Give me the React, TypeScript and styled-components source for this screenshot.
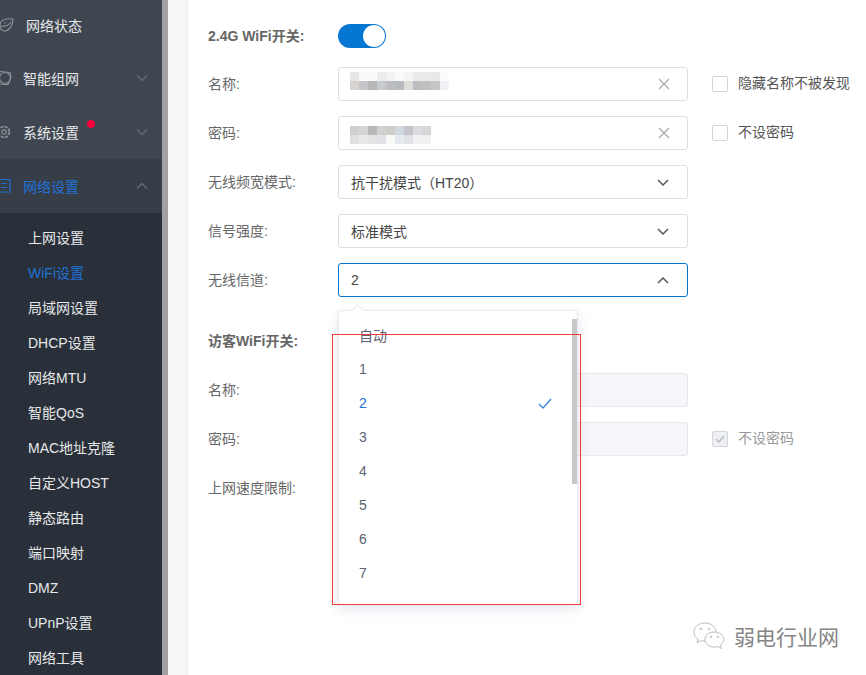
import React from 'react';
import styled, { createGlobalStyle } from 'styled-components';

const Global = createGlobalStyle`
  html, body { margin: 0; padding: 0; background: #fff; }
  * { box-sizing: border-box; }
`
const FONT = `"Liberation Sans", "Noto Sans CJK SC", sans-serif`

const Page = styled.div`
  position: relative;
  display: flex;
  width: 866px;
  height: 675px;
  overflow: hidden;
  font-family: ${FONT};
  background: #fff;
`
const Sidebar = styled.div`
  flex: 0 0 162px;
  height: 675px;
  overflow: hidden;
  background: #2a3039;
`
const MenuItem = styled.div<{ $open?: boolean; $pad: number; $h?: number; $lift?: number }>`
  position: relative;
  display: flex;
  align-items: center;
  height: ${p => p.$h ?? 54}px;
  padding: 0 14px ${p => p.$lift ?? 0}px ${p => p.$pad}px;
  background: ${p => (p.$open ? '#383e47' : '#3f4650')};
`
const MenuIcon = styled.svg<{ $active?: boolean }>`
  flex: none;
  width: 18px;
  height: 18px;
  margin-left: -28px;
  margin-right: 10px;
  fill: none;
  overflow: visible;
  stroke: ${p => (p.$active ? '#1f6fd2' : '#8a8f96')};
  stroke-width: 1.2;
`
const MenuLabel = styled.span<{ $active?: boolean }>`
  flex: 1;
  font-size: 14px;
  color: ${p => (p.$active ? '#1f72d8' : '#e6e8ea')};
`
const MenuChevron = styled.svg`
  flex: none;
  width: 12px;
  height: 8px;
  fill: none;
  stroke: #666d76;
  stroke-width: 1.3;
`
const RedDot = styled.i`
  position: absolute;
  left: 87px;
  top: 15px;
  width: 8px;
  height: 8px;
  border-radius: 50%;
  background: #f5003c;
`
const SubList = styled.div`
  padding-top: 8px;
`
const SubItem = styled.div<{ $active?: boolean }>`
  height: 35px;
  padding-left: 28px;
  line-height: 35px;
  font-size: 14px;
  color: ${p => (p.$active ? '#1f72d8' : '#e6e8ea')};
`
const Gutter = styled.div`
  flex: 0 0 6px;
  background: #a1a1a1;
`
const Margin = styled.div`
  flex: 0 0 20px;
  background: #f6f6f6;
  border-right: 1px solid #f0f0f0;
`
const Content = styled.div`
  position: relative;
  flex: 1;
  padding: 20px 0 0 20px;
`
const Row = styled.div<{ $gap?: number }>`
  display: flex;
  align-items: center;
  height: 34px;
  margin-bottom: ${p => p.$gap ?? 15}px;
`
const SwitchRow = styled(Row)`
  height: 32px;
`
const Label = styled.div<{ $bold?: boolean }>`
  flex: 0 0 130px;
  padding-bottom: 3px;
  font-size: 14px;
  font-weight: ${p => (p.$bold ? 700 : 400)};
  color: #666;
`
const Toggle = styled.div`
  display: flex;
  justify-content: flex-end;
  align-items: center;
  width: 48px;
  height: 24px;
  padding-right: 1px;
  border-radius: 12px;
  background: #0676d3;
`
const Knob = styled.i`
  width: 22px;
  height: 22px;
  border-radius: 50%;
  background: #fff;
`
const Field = styled.div<{ $focus?: boolean; $disabled?: boolean }>`
  display: flex;
  align-items: center;
  justify-content: space-between;
  flex: 0 0 350px;
  height: 34px;
  padding: 0 17px 0 12px;
  border: 1px solid ${p => (p.$focus ? '#0676d3' : p.$disabled ? '#e6e8ee' : '#dfdfdf')};
  border-radius: 3px;
  background: ${p => (p.$disabled ? '#f5f6fa' : '#fff')};
  font-size: 14px;
  color: #444;
`
const FieldIcon = styled.svg`
  flex: none;
  fill: none;
  stroke: #a8a8a8;
  stroke-width: 1.2;
`
const Caret = styled.svg`
  flex: none;
  width: 14px;
  height: 9px;
  fill: none;
  stroke: #555;
  stroke-width: 1.5;
`
const Option = styled.label<{ $disabled?: boolean }>`
  display: flex;
  align-items: center;
  margin-left: 24px;
  font-size: 14px;
  line-height: 18px;
  color: ${p => (p.$disabled ? '#999' : '#555')};
`
const OptionText = styled.span`
  padding-bottom: 2px;
`
const Box = styled.span<{ $disabled?: boolean }>`
  display: flex;
  align-items: center;
  justify-content: center;
  width: 16px;
  height: 16px;
  margin-right: 10px;
  border: 1px solid #d4d4d4;
  border-radius: 2px;
  background: ${p => (p.$disabled ? '#eef0f3' : '#fff')};
`
const Mosaic = styled.div<{ $up?: number; $down?: number }>`
  display: grid;
  grid-auto-rows: 9px;
  margin: ${p => p.$down ?? 0}px 0 ${p => p.$up ?? 0}px -1px;
  filter: blur(0.4px);
`
const MosaicRow = styled.div`
  display: flex;
`
const MosaicCell = styled.i<{ $c: string }>`
  width: 9px;
  height: 9px;
  background: ${p => p.$c};
`
const Dropdown = styled.div`
  position: absolute;
  left: 150px;
  top: 310px;
  width: 240px;
  height: 295px;
  padding-top: 7px;
  border: 1px solid #e8e8f0;
  border-bottom: none;
  border-radius: 4px 4px 0 0;
  background: #fff;
  box-shadow: 0 4px 12px rgba(90, 100, 140, 0.16);
`
const Arrow = styled.i`
  position: absolute;
  left: 14px;
  top: -5px;
  width: 9px;
  height: 9px;
  transform: rotate(45deg);
  background: #fff;
  border-left: 1px solid #e8e8f0;
  border-top: 1px solid #e8e8f0;
`
const DropItem = styled.div<{ $active?: boolean }>`
  display: flex;
  align-items: center;
  justify-content: space-between;
  height: 34px;
  padding: 0 25px 0 20px;
  font-size: 14px;
  color: ${p => (p.$active ? '#1f72d8' : '#5c6270')};
`
const ScrollThumb = styled.i`
  position: absolute;
  right: 0;
  top: 8px;
  width: 5px;
  height: 165px;
  background: #c8c8c8;
`
const RedFrame = styled.div`
  position: absolute;
  left: 332px;
  top: 334px;
  width: 249px;
  height: 271px;
  border: 1px solid #f33a3a;
  pointer-events: none;
`
const Watermark = styled.div`
  position: absolute;
  left: 692px;
  top: 621px;
  display: flex;
  align-items: center;
  gap: 8px;
  font-size: 21px;
  color: #858585;
`

const Chevron = ({ up }: { up?: boolean }) => (
  <MenuChevron viewBox="0 0 12 8">
    <path d={up ? 'M1 6.5 6 1.5 11 6.5' : 'M1 1.5 6 6.5 11 1.5'} />
  </MenuChevron>
)
const SelectCaret = ({ up }: { up?: boolean }) => (
  <Caret viewBox="0 0 14 9">
    <path d={up ? 'M2 7 7 2 12 7' : 'M2 2 7 7 12 2'} />
  </Caret>
)
const Clear = () => (
  <FieldIcon width="12" height="12" viewBox="0 0 12 12">
    <path d="M1 1 11 11M11 1 1 11" />
  </FieldIcon>
)

const NAME_CELLS = [
  ['#e6e6e6', '#fafafa', '#fafafa', '#ececec', '#f2f3f5', '#fafafa', '#f4f4f2', '#eaeaea', '#eaeaea', '#e8e8e8', '#fcfcfc'],
  ['#d8d4d0', '#c6c4ca', '#b8b6b6', '#c6cacc', '#bebec2', '#b6babe', '#dedcd8', '#bebcc0', '#c2c0be', '#c8c6c4', '#f0f2f6'],
]
const PASS_CELLS = [
  ['#d0d0d0', '#d4d4d4', '#b8b8b8', '#d0d2d0', '#cfcbc8', '#d2d8e0', '#c4c6cc', '#dcdce0', '#d6d6d6'],
  ['#e0e0e0', '#e8e8e8', '#e4e4e4', '#e0e0e6', '#fafaf8', '#e6eaee', '#e0e2e6', '#f0f0f2', '#f0f0f2'],
]
const Blurred = ({ cells, up, down }: { cells: string[][]; up?: number; down?: number }) => (
  <Mosaic $up={up} $down={down}>
    {cells.map((row, i) => (
      <MosaicRow key={i}>
        {row.map((c, j) => <MosaicCell key={j} $c={c} />)}
      </MosaicRow>
    ))}
  </Mosaic>
)

const SUBMENU = ['上网设置', 'WiFi设置', '局域网设置', 'DHCP设置', '网络MTU', '智能QoS', 'MAC地址克隆', '自定义HOST', '静态路由', '端口映射', 'DMZ', 'UPnP设置', '网络工具']
const CHANNELS = ['自动', '1', '2', '3', '4', '5', '6', '7']

export default function App() {
  return (
    <Page>
      <Global />
      <Sidebar>
        <MenuItem $pad={26} $h={51} $lift={2}>
          <MenuIcon viewBox="0 0 18 18">
            <path d="M2 9C2 4 8 2 15 3C15 10 11 15 6 15C3.500 15 2 12 2 9Z" />
            <path d="M2 10C7 11 11 9 13 6M6 7H7.500" />
          </MenuIcon>
          <MenuLabel>网络状态</MenuLabel>
        </MenuItem>
        <MenuItem $pad={23}>
          <MenuIcon viewBox="0 0 18 18">
            <circle cx="10" cy="9" r="5.500" />
            <path d="M5 2.500 15 3.500 16 8 13 15.500 5 15" />
          </MenuIcon>
          <MenuLabel>智能组网</MenuLabel>
          <Chevron />
        </MenuItem>
        <MenuItem $pad={23}>
          <MenuIcon viewBox="0 0 18 18">
            <circle cx="9" cy="9" r="2.200" />
            <circle cx="9" cy="9" r="5.400" strokeDasharray="3.200 1" strokeWidth="1.800" />
          </MenuIcon>
          <MenuLabel>系统设置</MenuLabel>
          <Chevron />
          <RedDot />
        </MenuItem>
        <MenuItem $pad={23} $open>
          <MenuIcon viewBox="0 0 18 18" $active>
            <path d="M4 2.500H15V15H4M6 6.500H11.500M6 10.500H11.500" />
          </MenuIcon>
          <MenuLabel $active>网络设置</MenuLabel>
          <Chevron up />
        </MenuItem>
        <SubList>
          {SUBMENU.map(s => <SubItem key={s} $active={s === 'WiFi设置'}>{s}</SubItem>)}
        </SubList>
      </Sidebar>
      <Gutter />
      <Margin />
      <Content>
        <SwitchRow>
          <Label $bold>2.4G WiFi开关:</Label>
          <Toggle><Knob /></Toggle>
        </SwitchRow>
        <Row>
          <Label>名称:</Label>
          <Field><Blurred cells={NAME_CELLS} up={6} /><Clear /></Field>
          <Option><Box /><OptionText>隐藏名称不被发现</OptionText></Option>
        </Row>
        <Row>
          <Label>密码:</Label>
          <Field><Blurred cells={PASS_CELLS} down={3} /><Clear /></Field>
          <Option><Box /><OptionText>不设密码</OptionText></Option>
        </Row>
        <Row>
          <Label>无线频宽模式:</Label>
          <Field>抗干扰模式（HT20）<SelectCaret /></Field>
        </Row>
        <Row>
          <Label>信号强度:</Label>
          <Field>标准模式<SelectCaret /></Field>
        </Row>
        <Row $gap={28}>
          <Label>无线信道:</Label>
          <Field $focus>2<SelectCaret up /></Field>
        </Row>
        <SwitchRow $gap={16}>
          <Label $bold>访客WiFi开关:</Label>
        </SwitchRow>
        <Row>
          <Label>名称:</Label>
          <Field $disabled />
        </Row>
        <Row>
          <Label>密码:</Label>
          <Field $disabled />
          <Option $disabled>
            <Box $disabled>
              <svg width="10" height="10" viewBox="0 0 10 10" fill="none" stroke="#b4b8c0" strokeWidth="1.4">
                <path d="M1 5 4 8 9 2" />
              </svg>
            </Box>
            <OptionText>不设密码</OptionText>
          </Option>
        </Row>
        <Row>
          <Label>上网速度限制:</Label>
        </Row>
        <Dropdown>
          <Arrow />
          {CHANNELS.map(c => (
            <DropItem key={c} $active={c === '2'}>
              {c}
              {c === '2' && (
                <svg width="14" height="11" viewBox="0 0 14 11" fill="none" stroke="#3c84dc" strokeWidth="1.4">
                  <path d="M1 6 5 10 13 1" />
                </svg>
              )}
            </DropItem>
          ))}
          <ScrollThumb />
        </Dropdown>
      </Content>
      <RedFrame />
      <Watermark>
        <svg width="34" height="30" viewBox="0 0 34 30" fill="#fff" stroke="#b4b4b4" strokeWidth="0.9">
          <path d="M13 2C6.500 2 2 6 2 11C2 14 3.500 16.500 6 18L5 21.500 9 19.500C10 19.800 11 20 13 20C19 20 24 16 24 11C24 6 19 2 13 2Z" />
          <path d="M22 11C16.500 11 13 14.500 13 18.500C13 22.500 17 26 22 26C23.500 26 24.500 25.800 25.500 25.500L29.500 27.500 28.500 24C30.500 22.500 32 20.500 32 18.500C32 14.500 27.500 11 22 11Z" />
          <circle cx="9" cy="8" r="0.800" />
          <circle cx="17" cy="8" r="0.800" />
          <circle cx="19" cy="16" r="0.800" />
          <circle cx="26" cy="16" r="0.800" />
        </svg>
        弱电行业网
      </Watermark>
    </Page>
  );
}
